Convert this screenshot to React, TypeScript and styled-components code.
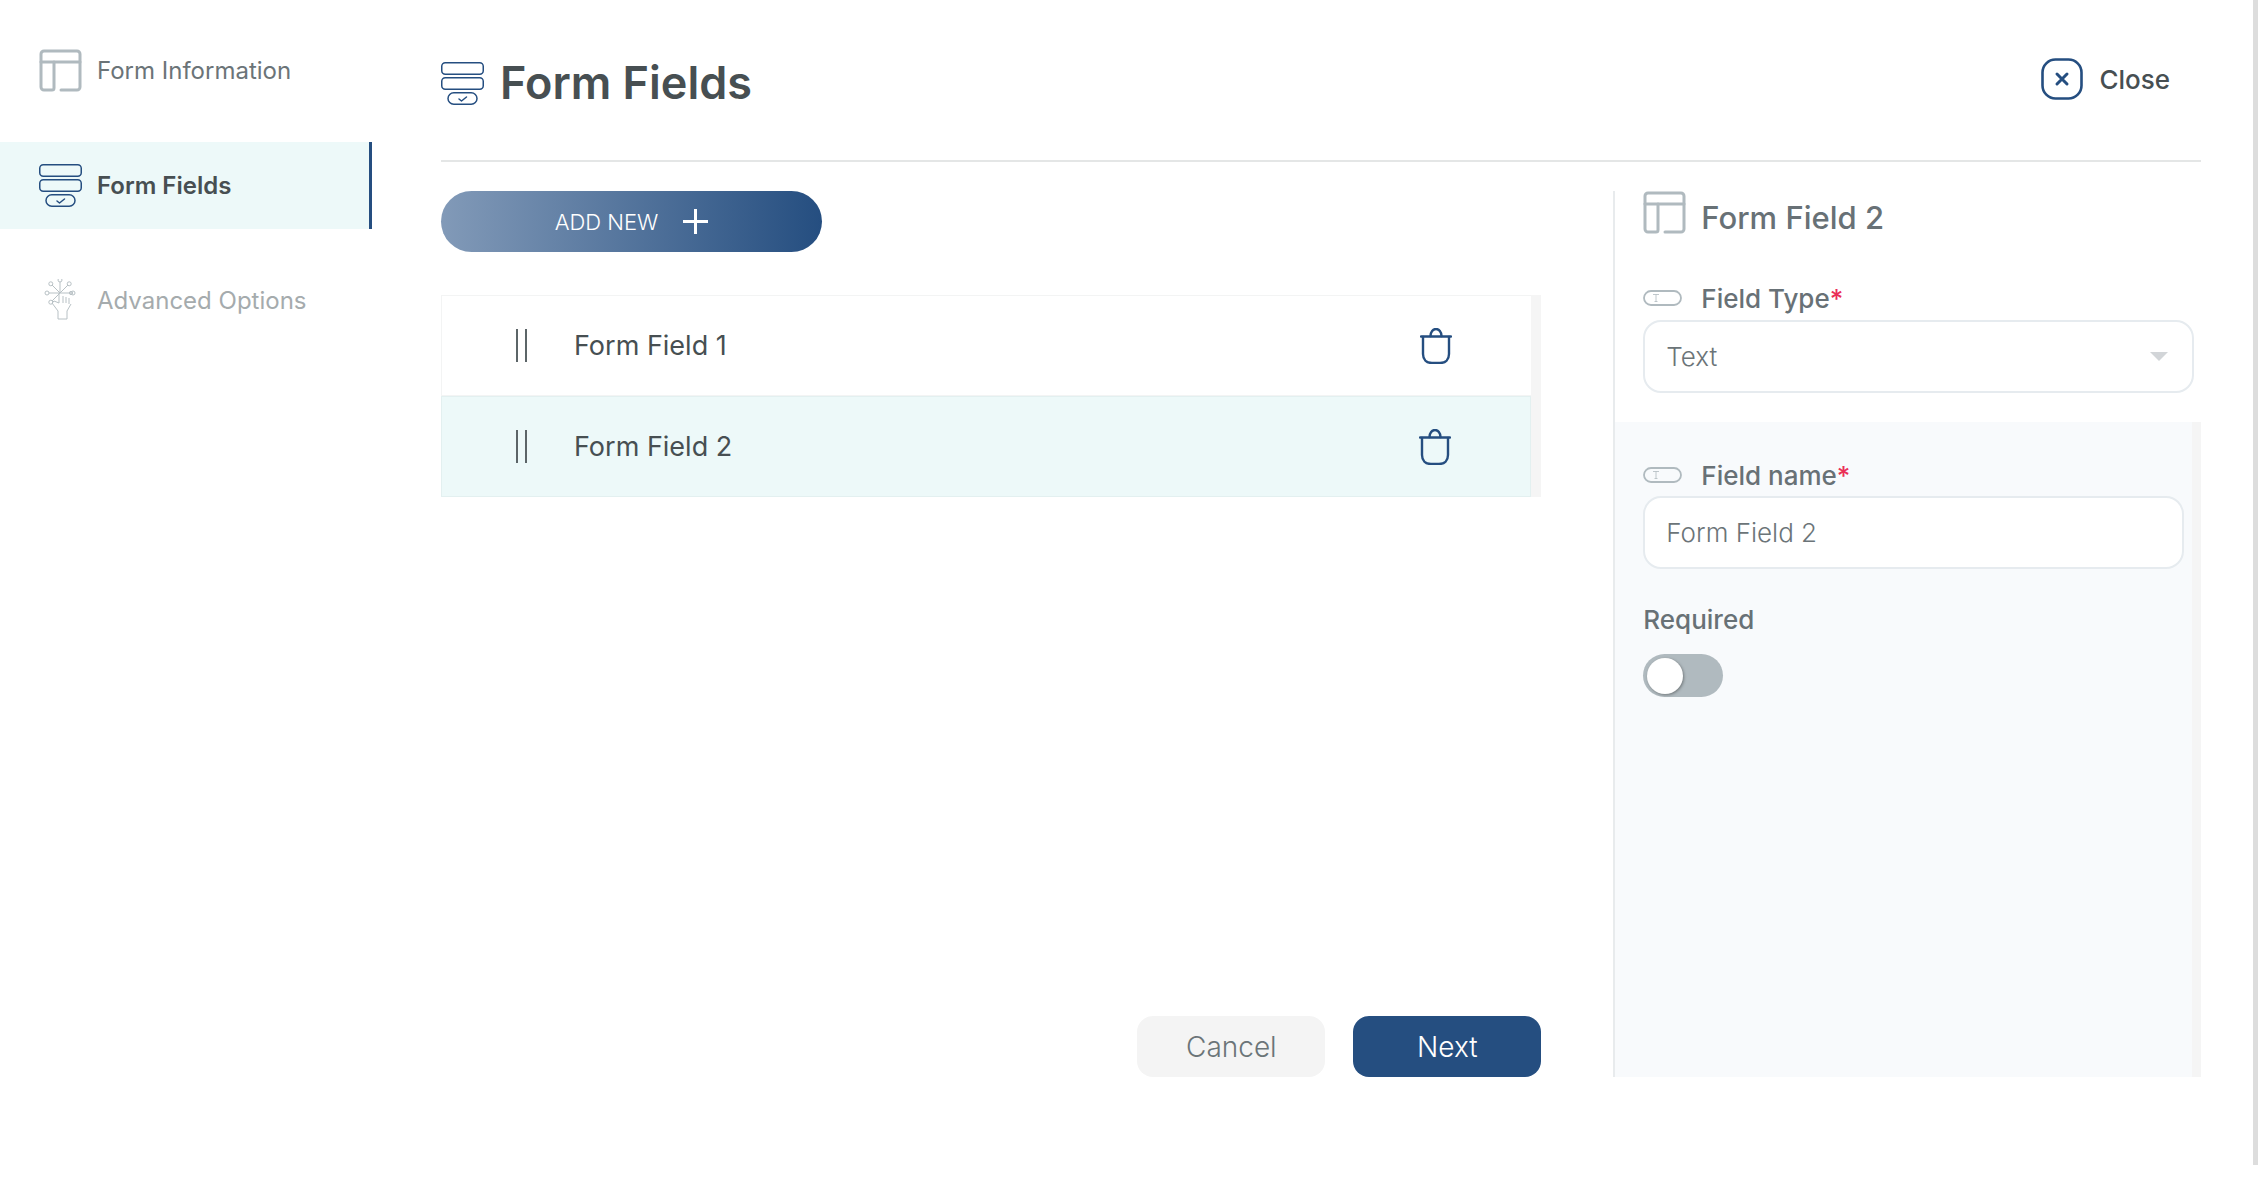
import styled, { createGlobalStyle } from 'styled-components';

const NAVY = '#254e80';
const ICON_GREY = '#b0babf';

const GlobalStyle = createGlobalStyle`
	html, body {
		margin: 0;
		padding: 0;
		height: 100%;
		overflow: hidden;
		background: #ffffff;
	}
	* {
		box-sizing: border-box;
	}
	body {
		font-family: Inter, 'Noto Sans', 'Liberation Sans', sans-serif;
		color: #474f52;
	}
`;

const LayoutIcon = () => (
	<svg width='43' height='43' viewBox='0 0 43 43' fill='none' stroke={ICON_GREY} strokeWidth='3' strokeLinecap='round'>
		<path d='M2 12V5a3 3 0 0 1 3-3h33a3 3 0 0 1 3 3v33a3 3 0 0 1-3 3H22' />
		<path d='M2 13h39' />
		<path d='M2 13v25a3 3 0 0 0 3 3h8a2 2 0 0 0 2-2V13' />
	</svg>
);

const FieldsIcon = () => (
	<svg width='43' height='43' viewBox='0 0 43 43' fill='none' stroke={NAVY} strokeWidth='1.5'>
		<rect x='0.75' y='0.75' width='41.5' height='11.5' rx='3.5' />
		<rect x='0.75' y='15.75' width='41.5' height='11.5' rx='3.5' />
		<rect x='7' y='30.75' width='29' height='11.5' rx='5.75' />
		<path d='M18 37l2.5 2 5-4' strokeLinecap='round' strokeLinejoin='round' />
	</svg>
);

const AdvancedIcon = () => {
	const nodes = [0, 45, 90, 135, 180, 225, 270, 315].map((deg) => {
		const rad = (deg * Math.PI) / 180;
		return { x: 16 + Math.cos(rad) * 13, y: 14 + Math.sin(rad) * 13, deg };
	});
	return (
		<svg width='33' height='43' viewBox='0 0 33 43' fill='none' stroke='#b8c1c5' strokeWidth='1'>
			{nodes
				.filter((n) => n.deg !== 90 && n.deg !== 45)
				.map((n) => (
					<g key={n.deg}>
						<line x1='16' y1='14' x2={n.x} y2={n.y} />
						<circle cx={n.x} cy={n.y} r='2' fill='#ffffff' />
					</g>
				))}
			<path d='M15 14v10M19 17v7M22 18v6M25 19v6M15 24l-5 -2-2 2 6 8v8h9v-8l4-7' />
			<circle cx='27' cy='14' r='1.6' />
		</svg>
	);
};

const PillIcon = () => (
	<svg width='39' height='16' viewBox='0 0 39 16' fill='none' stroke={ICON_GREY}>
		<rect x='1' y='1' width='37' height='14' rx='7' strokeWidth='1.8' />
		<path d='M10 4.5h6M13 4.5v7M11.5 11.5h3' strokeWidth='0.8' />
	</svg>
);

const TrashIcon = () => (
	<svg width='32' height='36' viewBox='0 0 32 36' fill='none' stroke={NAVY} strokeWidth='2.4' strokeLinecap='round'>
		<path d='M1 8.5h30' />
		<path d='M10.5 8c0-4 2.5-7 5.500-7s5.500 3 5.500 7' />
		<path d='M3 9v17c0 5.500 3.500 9 9 9h8c5.500 0 9-3.500 9-9V9' />
	</svg>
);

const CloseIcon = () => (
	<svg width='42' height='42' viewBox='0 0 42 42' fill='none' stroke={NAVY} strokeLinecap='round'>
		<rect x='1.5' y='1.5' width='39' height='39' rx='13' strokeWidth='2.6' />
		<path d='M16 16l10 10M26 16L16 26' strokeWidth='3' />
	</svg>
);

const PlusIcon = () => (
	<svg width='25' height='25' viewBox='0 0 25 25' stroke='#ffffff' strokeWidth='3'>
		<path d='M12.500 0v25M0 12.500h25' />
	</svg>
);

const App = () => {
	const fields = ['Form Field 1', 'Form Field 2'];

	return (
		<Page>
			<GlobalStyle />
			<Sidebar>
				<NavItem>
					<LayoutIcon />
					<NavLabel>Form Information</NavLabel>
				</NavItem>
				<NavItem $active>
					<FieldsIcon />
					<NavLabel $active>Form Fields</NavLabel>
				</NavItem>
				<NavItem>
					<AdvancedSlot>
						<AdvancedIcon />
					</AdvancedSlot>
					<NavLabel $muted>Advanced Options</NavLabel>
				</NavItem>
			</Sidebar>
			<Main>
				<Header>
					<TitleGroup>
						<FieldsIcon />
						<Title>Form Fields</Title>
					</TitleGroup>
					<CloseButton type='button'>
						<CloseIcon />
						Close
					</CloseButton>
				</Header>
				<Body>
					<ListColumn>
						<AddButton type='button'>
							ADD NEW
							<PlusIcon />
						</AddButton>
						<FieldList>
							{fields.map((field, index) => (
								<FieldRow key={field} $selected={index === 1}>
									<Grip />
									<FieldName>{field}</FieldName>
									<TrashIcon />
								</FieldRow>
							))}
						</FieldList>
						<Footer>
							<CancelButton type='button'>Cancel</CancelButton>
							<NextButton type='button'>Next</NextButton>
						</Footer>
					</ListColumn>
					<DetailPanel>
						<DetailTop>
							<DetailTitle>
								<LayoutIcon />
								<DetailHeading>Form Field 2</DetailHeading>
							</DetailTitle>
							<FieldLabel $spaced>
								<PillIcon />
								<span>
									Field Type<Star>*</Star>
								</span>
							</FieldLabel>
							<SelectBox>
								Text
								<Caret />
							</SelectBox>
						</DetailTop>
						<DetailBottom>
							<DetailForm>
								<FieldLabel>
									<PillIcon />
									<span>
										Field name<Star>*</Star>
									</span>
								</FieldLabel>
								<TextInput readOnly value='Form Field 2' />
								<RequiredLabel>Required</RequiredLabel>
								<Toggle>
									<Knob />
								</Toggle>
							</DetailForm>
							<PanelScrollTrack />
						</DetailBottom>
					</DetailPanel>
				</Body>
			</Main>
			<PageScrollThumb />
		</Page>
	);
};

const Page = styled.div`
	display: flex;
	width: 2258px;
	height: 1198px;
	overflow: hidden;
	background: #ffffff;
`;

const Sidebar = styled.nav`
	width: 372px;
	flex-shrink: 0;
	padding-top: 27px;
	display: flex;
	flex-direction: column;
	gap: 28px;
`;

const NavItem = styled.div<{ $active?: boolean }>`
	height: 87px;
	display: flex;
	align-items: center;
	gap: 15px;
	padding-left: 39px;
	background: ${(p) => (p.$active ? '#edf9f9' : 'transparent')};
	border-right: 3px solid ${(p) => (p.$active ? NAVY : 'transparent')};
`;

const AdvancedSlot = styled.div`
	width: 43px;
	display: flex;
	justify-content: center;
`;

const NavLabel = styled.span<{ $active?: boolean; $muted?: boolean }>`
	font-size: 24px;
	font-weight: ${(p) => (p.$active ? 600 : 400)};
	color: ${(p) => (p.$active ? '#474f52' : p.$muted ? '#a5abad' : '#6b7478')};
`;

const Main = styled.main`
	margin-left: 69px;
	width: 1760px;
	display: flex;
	flex-direction: column;
`;

const Header = styled.header`
	height: 162px;
	flex-shrink: 0;
	padding: 58px 31px 0 0;
	display: flex;
	align-items: flex-start;
	justify-content: space-between;
	border-bottom: 2px solid #e4e6e6;
`;

const TitleGroup = styled.div`
	display: flex;
	align-items: center;
	gap: 16px;
`;

const Title = styled.h1`
	margin: 0;
	font-size: 45px;
	line-height: 50px;
	font-weight: 600;
	color: #474f52;
`;

const CloseButton = styled.button`
	display: flex;
	align-items: center;
	gap: 16px;
	padding: 0;
	border: none;
	background: none;
	font: inherit;
	font-size: 26px;
	font-weight: 500;
	color: #474f52;
`;

const Body = styled.div`
	height: 886px;
	margin-top: 29px;
	display: flex;
	gap: 72px;
`;

const ListColumn = styled.section`
	width: 1101px;
	display: flex;
	flex-direction: column;
	align-items: flex-start;
`;

const AddButton = styled.button`
	width: 381px;
	height: 61px;
	display: flex;
	align-items: center;
	justify-content: center;
	gap: 25px;
	border: none;
	border-radius: 31px;
	background: linear-gradient(90deg, #829ab8 0%, #254e80 100%);
	color: #ffffff;
	font: inherit;
	font-size: 22px;
	font-weight: 300;
`;

const FieldList = styled.div`
	width: 100%;
	margin-top: 43px;
	padding-right: 10px;
	background: #f5f5f5;
`;

const FieldRow = styled.div<{ $selected?: boolean }>`
	height: 101px;
	display: flex;
	align-items: center;
	padding: 0 79px 0 74px;
	background: ${(p) => (p.$selected ? '#edf9f9' : '#ffffff')};
	border: 1px solid ${(p) => (p.$selected ? '#e3f0f0' : '#f3f4f4')};
	border-right-width: ${(p) => (p.$selected ? '1px' : '0')};
`;

const Grip = styled.div`
	width: 11px;
	height: 33px;
	border-left: 2px solid #5c6568;
	border-right: 2px solid #5c6568;
`;

const FieldName = styled.span`
	flex: 1;
	margin-left: 47px;
	font-size: 27px;
	color: #474f52;
`;

const Footer = styled.div`
	margin-top: auto;
	align-self: flex-end;
	display: flex;
	gap: 28px;
`;

const CancelButton = styled.button`
	width: 188px;
	height: 61px;
	border: none;
	border-radius: 16px;
	background: #f4f4f4;
	color: #6b7478;
	font: inherit;
	font-size: 28px;
	font-weight: 300;
`;

const NextButton = styled(CancelButton)`
	background: ${NAVY};
	color: #ffffff;
`;

const DetailPanel = styled.aside`
	width: 588px;
	border-left: 2px solid #e8ebed;
	display: flex;
	flex-direction: column;
`;

const DetailTop = styled.div`
	padding: 0 7px 29px 28px;
`;

const DetailTitle = styled.div`
	height: 42px;
	display: flex;
	align-items: flex-start;
	gap: 15px;
`;

const DetailHeading = styled.h2`
	margin: 6px 0 0;
	font-size: 31px;
	line-height: 42px;
	font-weight: 500;
	color: #687176;
`;

const FieldLabel = styled.label<{ $spaced?: boolean }>`
	height: 32px;
	margin-top: ${(p) => (p.$spaced ? '49px' : '0')};
	display: flex;
	align-items: center;
	gap: 19px;
	font-size: 26px;
	font-weight: 500;
	color: #687176;
`;

const Star = styled.span`
	color: #ea2f56;
`;

const SelectBox = styled.div`
	height: 73px;
	margin-top: 6px;
	padding: 0 24px 0 21px;
	display: flex;
	align-items: center;
	justify-content: space-between;
	background: #ffffff;
	border: 2px solid #e6ebef;
	border-radius: 18px;
	font-size: 26px;
	font-weight: 300;
	color: #6b7478;
`;

const Caret = styled.div`
	width: 0;
	height: 0;
	border-left: 9px solid transparent;
	border-right: 9px solid transparent;
	border-top: 9px solid #d2d5d8;
`;

const DetailBottom = styled.div`
	flex: 1;
	display: flex;
	background: #f8fafc;
`;

const DetailForm = styled.div`
	flex: 1;
	padding: 37px 8px 0 28px;
`;

const PanelScrollTrack = styled.div`
	width: 9px;
	background: #f5f5f5;
`;

const TextInput = styled.input`
	display: block;
	width: 100%;
	height: 73px;
	margin-top: 5px;
	padding: 0 21px;
	background: #ffffff;
	border: 2px solid #e6ebef;
	border-radius: 18px;
	outline: none;
	font-family: inherit;
	font-size: 26px;
	font-weight: 300;
	color: #6b7478;
`;

const RequiredLabel = styled.div`
	height: 32px;
	margin-top: 34px;
	display: flex;
	align-items: center;
	font-size: 26px;
	font-weight: 500;
	color: #687176;
`;

const Toggle = styled.div`
	width: 80px;
	height: 43px;
	margin-top: 19px;
	padding: 4px;
	display: flex;
	align-items: center;
	border-radius: 22px;
	background: ${ICON_GREY};
`;

const Knob = styled.div`
	width: 36px;
	height: 36px;
	border-radius: 50%;
	background: #ffffff;
	box-shadow: 1px 1px 3px rgba(0, 0, 0, 0.35);
`;

const PageScrollThumb = styled.div`
	position: fixed;
	top: 0;
	right: 0;
	width: 5px;
	height: 1165px;
	background: #dddddd;
`;

export default App;
